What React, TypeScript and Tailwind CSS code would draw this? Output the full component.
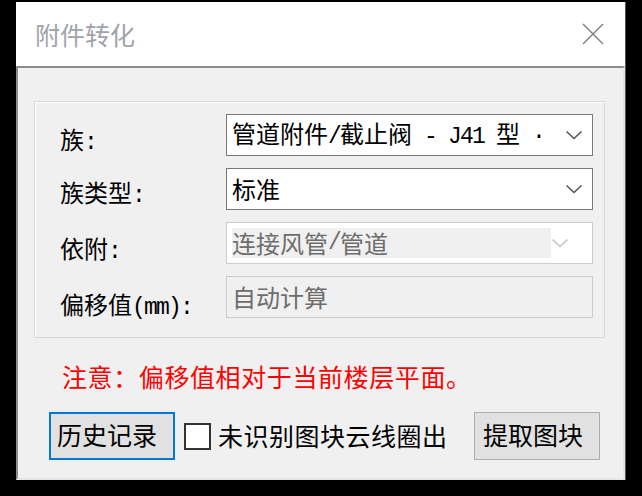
const font = "font-['Noto_Sans_CJK_SC','Noto_Sans',sans-serif]";
const half = "font-['Liberation_Mono',monospace] text-[23px] tracking-[-1.8px]";

function Chevron({ color }: { color: string }) {
  return (
    <svg width="18" height="10" viewBox="0 0 18 10" fill="none" aria-hidden="true">
      <path d="M1.5 1.5L9 8.5L16.5 1.5" stroke={color} strokeWidth="1.6" />
    </svg>
  );
}

export default function App() {
  return (
    <div className={`w-[642px] h-[496px] bg-black pt-[2px] pl-[16px] pr-[16px] pb-[16px] ${font}`}>
      <div className="h-full flex flex-col bg-white border-r border-[#555555]">
        {/* Title bar */}
        <div className="h-[64px] shrink-0 flex items-center pl-[19px] pr-[21px]">
          <span className="text-[25px] leading-[28px] text-[#a0a4aa]">附件转化</span>
          <svg className="ml-auto" width="22" height="22" viewBox="0 0 22 22" fill="none" aria-hidden="true">
            <path d="M1 1L21 21M21 1L1 21" stroke="#7a7a7a" strokeWidth="1.3" />
          </svg>
        </div>

        {/* Client area */}
        <div className="flex-1 flex flex-col bg-[#f0f0f0] border-2 border-t-[#8c8c8c] border-l-[#8c8c8c] border-r-[#e6e6e6] border-b-[#e6e6e6]">
          {/* Group box */}
          <div className="mt-[33px] ml-[16px] w-[571px] h-[237px] border border-[#d8d8d8] shadow-[inset_1px_1px_0_#ffffff] pt-[12px] pl-[25px]">
            <div className="grid grid-cols-[166px_367px] gap-y-[12px] text-[24px] leading-[28px]">
              <div className="h-[42px] pt-[11px] text-black">
                族<span className={half}>:</span>
              </div>
              <div className="h-[42px] flex items-center bg-white border border-[#7a7a7a] pl-[5px] pr-[9px]">
                <span className="flex-1 whitespace-pre text-black">
                  管道附件<span className={half}>/</span>截止阀<span className={half}> - J41 </span>型<span className={half}> ·</span>
                </span>
                <Chevron color="#555555" />
              </div>

              <div className="h-[42px] pt-[10px] text-black">
                族类型<span className={half}>:</span>
              </div>
              <div className="h-[42px] flex items-center bg-white border border-[#7a7a7a] pl-[5px] pr-[9px]">
                <span className="flex-1 text-black">标准</span>
                <Chevron color="#555555" />
              </div>

              <div className="h-[42px] pt-[12px] text-black">
                依附<span className={half}>:</span>
              </div>
              <div className="h-[42px] flex items-center bg-white border border-[#cccccc] pl-[5px] pr-[9px]">
                <span className="w-[319px] h-[30px] flex items-center bg-[#f0f0f0] text-[#6d6d6d]">
                  连接风管<span className={half}>/</span>管道
                </span>
                <Chevron color="#c4c4c4" />
              </div>

              <div className="h-[42px] pt-[14px] text-black">
                偏移值<span className={half}>(mm):</span>
              </div>
              <div className="h-[42px] flex items-center bg-[#f0f0f0] border border-[#cccccc] pl-[5px]">
                <span className="text-[#6d6d6d]">自动计算</span>
              </div>
            </div>
          </div>

          {/* Note */}
          <div className="mt-[24px] ml-[44px] text-[25px] leading-[28px] tracking-[0.6px] text-[#ff0000]">
            注意：偏移值相对于当前楼层平面。
          </div>

          {/* Bottom row */}
          <div className="mt-[22px] flex items-center text-[25px] leading-[28px] text-black">
            <button className="ml-[31px] w-[126px] h-[48px] border-2 border-[#0078d7] bg-[#e1e1e1] text-left pl-[6px] pb-[5px]">
              历史记录
            </button>
            <div className="ml-[9px] w-[27px] h-[27px] border-2 border-[#333333] bg-white" />
            <span className="ml-[7px] pb-[3px] tracking-[0.5px]">未识别图块云线圈出</span>
            <button className="ml-auto mr-[23px] w-[126px] h-[48px] border border-[#adadad] bg-[#e1e1e1] text-left pl-[8px] pb-[5px]">
              提取图块
            </button>
          </div>
        </div>
      </div>
    </div>
  );
}
